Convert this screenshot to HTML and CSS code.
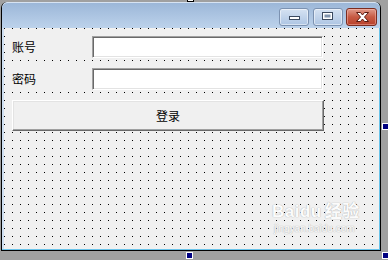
FILE: index.html
```html
<!DOCTYPE html>
<html lang="zh-CN">
<head>
    <meta charset="UTF-8">
    <title>Form1</title>
    <link rel="stylesheet" href="styles.css">
</head>
<body>
    <div class="form">
        <div class="titlebar">
            <div class="cap min">
                <svg width="30" height="18" viewBox="0 0 30 18"><rect x="10.5" y="8.5" width="10" height="3" fill="#fff" stroke="#3b4a60"/></svg>
            </div>
            <div class="cap max">
                <svg width="30" height="18" viewBox="0 0 30 18"><rect x="9.5" y="4.5" width="10" height="7" fill="#fff" stroke="#3b4a60"/><rect x="11.5" y="6.5" width="6" height="3" fill="#7f93ad"/></svg>
            </div>
            <div class="cap close">
                <svg width="31" height="18" viewBox="0 0 31 18">
                    <path d="M10.5 4.5h4l2 2.5 2-2.5h4l-4 4.5 4 4.5h-4l-2-2.5-2 2.5h-4l4-4.5z" fill="#fff" stroke="#5a1a10"/>
                </svg>
            </div>
        </div>
        <div class="client">
            <div class="row">
                <span class="label">账号</span>
                <span class="textbox"></span>
            </div>
            <div class="row">
                <span class="label">密码</span>
                <span class="textbox"></span>
            </div>
            <div class="button">登录</div>

            <div class="watermark">
                <div class="wm-logo">Bai<span class="paw">du</span>经验</div>
                <div class="wm-url">jingyan.baidu.com</div>
            </div>
        </div>
    </div>

    <span class="grip grip-top"></span>
    <span class="handle handle-right"></span>
    <span class="handle handle-bottom"></span>
    <span class="handle handle-corner"></span>
</body>
</html>
```

FILE: styles.css
```css
body {
    margin: 0;
    width: 388px;
    height: 260px;
    overflow: hidden;
    position: relative;
    background-color: #a0a0a0;
    font-family: "Noto Sans CJK SC", "Liberation Sans", sans-serif;
    font-size: 12px;
    color: #000;
}

.form {
    width: 378px;
    height: 248px;
    margin: 2px 0 0 1px;
    border: 1px solid #000;
    border-top: 0;
    border-radius: 6px 6px 0 0;
    background-color: #cfdff1;
    display: flex;
    flex-direction: column;
    overflow: hidden;
    box-shadow: inset -1px -1px 0 #6ac4ea;
}

.titlebar {
    height: 26px;
    flex-shrink: 0;
    box-sizing: border-box;
    padding: 5px 3px 0 0;
    display: flex;
    justify-content: flex-end;
    gap: 4px;
    background: linear-gradient(#9cb7d8, #bcd2eb);
    border-top: 1px solid #d7e3f2;
    border-radius: 6px 6px 0 0;
}

.cap {
    width: 30px;
    height: 18px;
    box-sizing: border-box;
    border: 1px solid #7c92b1;
    border-radius: 3px;
    background: linear-gradient(#d5e2f2, #adc5e3);
    box-shadow: inset 0 0 0 1px rgba(255, 255, 255, 0.5);
    position: relative;
}

.cap svg {
    position: absolute;
    left: -1px;
    top: -1px;
}

.cap.close {
    width: 31px;
    margin-left: -1px;
    border-color: #7b2c20;
    background: linear-gradient(#e09a8a, #c75a43 50%, #b8412b);
    box-shadow: inset 0 0 0 1px rgba(255, 200, 190, 0.45);
}

.client {
    flex: 1;
    margin: 0 1px 1px 2px;
    padding: 8px 0 0 8px;
    display: flex;
    flex-direction: column;
    gap: 10px;
    position: relative;
    background: conic-gradient(from 270deg at 1px 1px, #000 90deg, #f0f0f0 0) 0 0 / 8px 8px;
}

.row {
    display: flex;
    align-items: stretch;
    height: 22px;
}

.label {
    width: 80px;
    box-sizing: border-box;
    padding-top: 2px;
    line-height: 17px;
    background: #f0f0f0;
}

.textbox {
    width: 231px;
    height: 22px;
    box-sizing: border-box;
    background: #fff;
    border: 1px solid;
    border-color: #a0a0a0 #fff #fff #a0a0a0;
    box-shadow: inset 1px 1px 0 #696969, inset -1px -1px 0 #e3e3e3;
}

.button {
    width: 312px;
    height: 31px;
    box-sizing: border-box;
    padding-bottom: 1px;
    background: #f0f0f0;
    border: 1px solid;
    border-color: #fff #696969 #696969 #fff;
    box-shadow: inset -1px -1px 0 #a0a0a0, inset 1px 1px 0 #e3e3e3;
    display: flex;
    align-items: center;
    justify-content: center;
    font-size: 12px;
}

.watermark {
    position: absolute;
    left: 268px;
    top: 174px;
    color: #fbfbfb;
    text-shadow: 0 0 1px #b8b8b8, 0 0 1px #b8b8b8;
    pointer-events: none;
}

.wm-logo {
    font-family: "Liberation Sans", "Noto Sans CJK SC", sans-serif;
    font-size: 17px;
    font-weight: bold;
    line-height: 20px;
    letter-spacing: 0.5px;
}

.paw {
    margin-right: 3px;
}

.wm-url {
    font-family: "Liberation Sans", sans-serif;
    font-size: 10px;
    line-height: 14px;
    margin-left: 2px;
}

.handle {
    position: absolute;
    width: 5px;
    height: 5px;
    border: 1px solid #fff;
    background: #000080;
}

.handle-right {
    left: 382px;
    top: 123px;
}

.handle-bottom {
    left: 186px;
    top: 252px;
}

.handle-corner {
    left: 382px;
    top: 252px;
}

.grip {
    position: absolute;
    width: 5px;
    height: 5px;
    border: 1px solid #000;
    background: #fff;
}

.grip-top {
    left: 187px;
    top: -5px;
}
```
